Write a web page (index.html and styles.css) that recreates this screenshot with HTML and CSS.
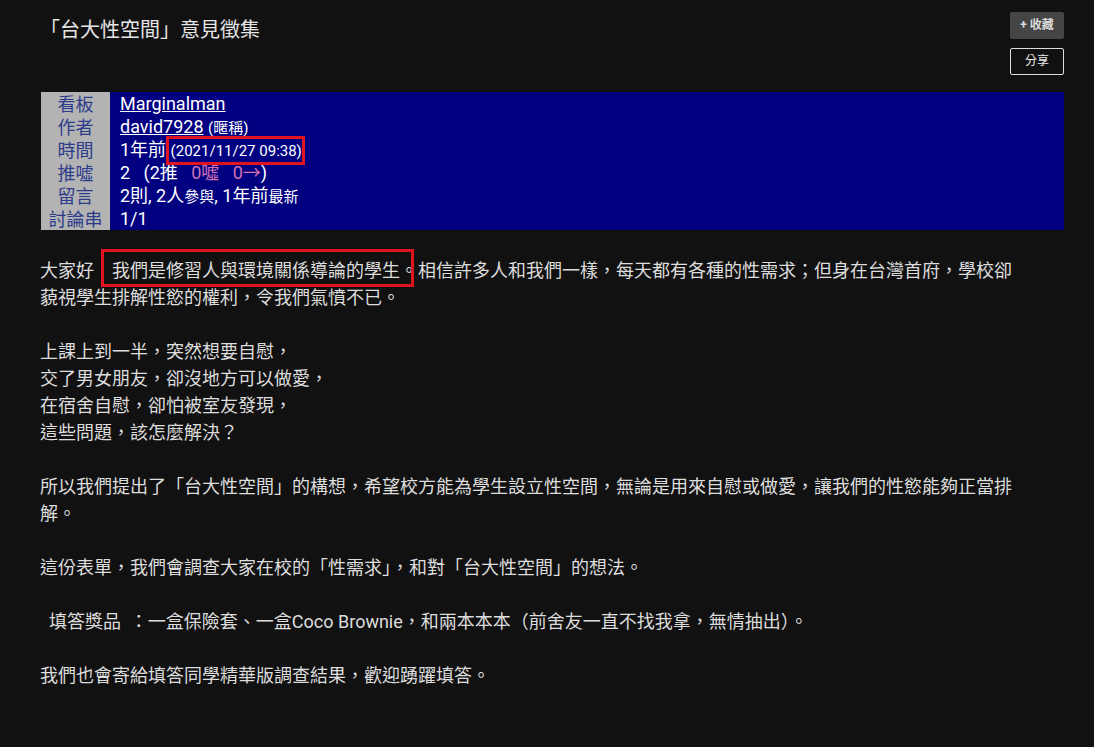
FILE: index.html
```html
<!DOCTYPE html>
<html lang="zh-Hant">

<head>
    <meta charset="UTF-8">
    <meta name="viewport" content="width=device-width, initial-scale=1.0">
    <title>「台大性空間」意見徵集</title>
    <link rel="stylesheet" href="styles.css">
</head>

<body>
    <div class="page">
        <div class="post-header">
            <h1 class="post-title">「台大性空間」意見徵集</h1>
            <div class="post-actions">
                <a class="btn btn-fav" href="javascript:;">+ 收藏</a>
                <a class="btn btn-share" href="javascript:;">分享</a>
            </div>
        </div>

        <table class="meta">
            <tr>
                <th>看板</th>
                <td><a href="javascript:;">Marginalman</a></td>
            </tr>
            <tr>
                <th>作者</th>
                <td><a href="javascript:;">david7928</a> <small>(暱稱)</small></td>
            </tr>
            <tr>
                <th>時間</th>
                <td>1年前 <span class="mark mark-date"><small>(2021/11/27 09:38)</small></span></td>
            </tr>
            <tr>
                <th>推噓</th>
                <td>2&nbsp;&nbsp;&nbsp;(2推&nbsp;&nbsp;&nbsp;<span class="boo">0噓&nbsp;&nbsp;&nbsp;0→</span>)</td>
            </tr>
            <tr>
                <th>留言</th>
                <td>2則, 2人<small>參與</small>, 1年前<small>最新</small></td>
            </tr>
            <tr>
                <th>討論串</th>
                <td>1/1</td>
            </tr>
        </table>

        <div class="content">
            <p>大家好　<span class="mark mark-text">我們是修習人與環境關係導論的學生</span>。相信許多人和我們一樣，每天都有各種的性需求；但身在台灣首府，學校卻藐視學生排解性慾的權利，令我們氣憤不已。</p>
            <p>上課上到一半，突然想要自慰，<br>交了男女朋友，卻沒地方可以做愛，<br>在宿舍自慰，卻怕被室友發現，<br>這些問題，該怎麼解決？</p>
            <p>所以我們提出了「台大性空間」的構想，希望校方能為學生設立性空間，無論是用來自慰或做愛，讓我們的性慾能夠正當排解。</p>
            <p>這份表單，我們會調查大家在校的「性需求」，和對「台大性空間」的想法。</p>
            <p>&nbsp;&nbsp;填答獎品&nbsp;&nbsp;：一盒保險套、一盒Coco Brownie，和兩本本本（前舍友一直不找我拿，無情抽出）。</p>
            <p>我們也會寄給填答同學精華版調查結果，歡迎踴躍填答。</p>
        </div>
    </div>
</body>

</html>
```

FILE: styles.css
```css
* {
    margin: 0;
    padding: 0;
    box-sizing: border-box;
}

body {
    background-color: #111;
    color: #ddd;
    font-family: Roboto, "Noto Sans CJK TC", sans-serif;
}

a {
    color: #ddd;
    text-decoration: none;
}

.page {
    padding: 12px 30px 0 40px;
}

.post-header {
    display: flex;
    justify-content: space-between;
    align-items: flex-start;
}

.post-title {
    font-size: 20px;
    font-weight: normal;
    line-height: 28px;
    margin-top: 3px;
    color: #e6e6e6;
    font-family: "Noto Sans CJK TC", sans-serif;
}

.post-actions {
    display: flex;
    flex-direction: column;
    gap: 9px;
    width: 54px;
}

.btn {
    display: block;
    height: 27px;
    line-height: 27px;
    text-align: center;
    font-size: 12px;
    border-radius: 2px;
}

.btn-fav {
    background-color: #454545;
    color: #ddd;
    font-weight: bold;
}

.btn-share {
    border: 1px solid #ddd;
    line-height: 25px;
    color: #eee;
}

.meta {
    width: 1023px;
    margin: 17px 0 0 1px;
    border-collapse: collapse;
    font-size: 18px;
}

.meta th,
.meta td {
    height: 23px;
    padding: 0;
    line-height: 23px;
    white-space: nowrap;
}

.meta th {
    width: 69px;
    background-color: #b3b3b3;
    color: #2e3c8c;
    font-weight: normal;
    text-align: center;
    font-family: "Noto Sans CJK TC", sans-serif;
}

.meta td {
    padding-left: 10px;
    background-color: #000080;
    color: #fff;
}

.meta td a {
    color: #fff;
    text-decoration: underline;
}

.meta small {
    font-size: 15px;
    line-height: 1;
}

.meta .boo {
    color: #d070b0;
}

.mark {
    position: relative;
}

.mark::after {
    content: "";
    position: absolute;
    border: 3px solid #e0141e;
}

.mark-date {
    line-height: 1;
}

.mark-date::after {
    top: -3px;
    bottom: -5px;
    left: -5px;
    right: -3px;
}

.content {
    width: 984px;
    margin-top: 27px;
    font-size: 18px;
    line-height: 27px;
    color: #ddd;
}

.content p {
    margin-bottom: 27px;
}

.mark-text::after {
    top: -11px;
    bottom: -6px;
    left: -11px;
    right: -14px;
}
```
